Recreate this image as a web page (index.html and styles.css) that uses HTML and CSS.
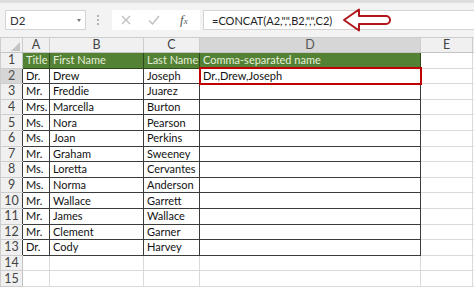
FILE: index.html
```html
<!DOCTYPE html>
<html>
<head>
    <meta charset="utf-8">
    <link rel="stylesheet" href="styles.css">
</head>
<body>
<div class="topEdge"></div>
<div class="formulaBar">
    <div class="nameBox"><span>D2</span><i class="dropArrow"></i></div>
    <div class="grip"><i></i><i></i><i></i></div>
    <div class="fxBox">
        <svg class="cancelIcon" width="10" height="10" viewBox="0 0 10 10"><path d="M1 1L9 9M9 1L1 9" stroke="#bdbdbd" stroke-width="1.2" fill="none"/></svg>
        <svg class="enterIcon" width="12" height="10" viewBox="0 0 12 10"><path d="M1 5.5L4.5 9L11 1" stroke="#bdbdbd" stroke-width="1.3" fill="none"/></svg>
        <span class="fx">f<small>x</small></span>
    </div>
    <div class="formulaInput">
        <span class="formulaText">=CONCAT(A2,",",B2,",",C2)</span>
        <svg class="callout" width="52" height="26" viewBox="0 0 52 26"><path d="M4 13L19 2.5L19 9L46 9A4 4 0 0 1 46 17L19 17L19 23.5Z" fill="#fff" stroke="#b0171c" stroke-width="2" stroke-linejoin="round"/></svg>
    </div>
</div>
<table class="sheet">
    <colgroup>
        <col style="width:22px"><col style="width:27px"><col style="width:94px"><col style="width:56px"><col style="width:221px"><col style="width:52px"><col style="width:2px">
    </colgroup>
    <tr class="colHead">
        <th class="corner"><svg width="9" height="9" viewBox="0 0 9 9"><path d="M9 0L9 9L0 9Z" fill="#c4c4c4"/></svg></th>
        <th>A</th><th>B</th><th>C</th><th class="active">D</th><th>E</th><th></th>
    </tr>
    <tr class="tableHead">
        <th>1</th><td>Title</td><td>First Name</td><td>Last Name</td><td>Comma-separated name</td><td></td><td></td>
    </tr>
    <tr class="data">
        <th class="active">2</th><td>Dr.</td><td>Drew</td><td>Joseph</td><td class="selected">Dr.,Drew,Joseph</td><td></td><td></td>
    </tr>
    <tr class="data"><th>3</th><td>Mr.</td><td>Freddie</td><td>Juarez</td><td></td><td></td><td></td></tr>
    <tr class="data"><th>4</th><td>Mrs.</td><td>Marcella</td><td>Burton</td><td></td><td></td><td></td></tr>
    <tr class="data"><th>5</th><td>Ms.</td><td>Nora</td><td>Pearson</td><td></td><td></td><td></td></tr>
    <tr class="data"><th>6</th><td>Ms.</td><td>Joan</td><td>Perkins</td><td></td><td></td><td></td></tr>
    <tr class="data"><th>7</th><td>Mr.</td><td>Graham</td><td>Sweeney</td><td></td><td></td><td></td></tr>
    <tr class="data"><th>8</th><td>Ms.</td><td>Loretta</td><td>Cervantes</td><td></td><td></td><td></td></tr>
    <tr class="data"><th>9</th><td>Ms.</td><td>Norma</td><td>Anderson</td><td></td><td></td><td></td></tr>
    <tr class="data"><th>10</th><td>Mr.</td><td>Wallace</td><td>Garrett</td><td></td><td></td><td></td></tr>
    <tr class="data"><th>11</th><td>Mr.</td><td>James</td><td>Wallace</td><td></td><td></td><td></td></tr>
    <tr class="data"><th>12</th><td>Mr.</td><td>Clement</td><td>Garner</td><td></td><td></td><td></td></tr>
    <tr class="data"><th>13</th><td>Dr.</td><td>Cody</td><td>Harvey</td><td></td><td></td><td></td></tr>
    <tr><th>14</th><td></td><td></td><td></td><td></td><td></td><td></td></tr>
    <tr><th>15</th><td></td><td></td><td></td><td></td><td></td><td></td></tr>
</table>
</body>
</html>
```

FILE: styles.css
```css
body{
    margin: 0; padding: 0;
    background-color: #f3f3f3;
    font-family: Lato, "Open Sans", sans-serif;
    color: #111;
    overflow: hidden;
}
.topEdge{
    height: 3px;
    background-color: #dedede;
}
.formulaBar{
    display: flex;
    height: 20px;
    margin: 7px 0 7px 0;
    padding-left: 5px;
}
.nameBox{
    width: 81px;
    box-sizing: border-box;
    display: flex; align-items: center; justify-content: space-between;
    padding: 0 4px 0 4px;
    background-color: #fff;
    border: 1px solid #d4d4d4;
    font-size: 11.5px; color: #333;
}
.dropArrow{
    width: 0; height: 0;
    border-left: 2.5px solid transparent;
    border-right: 2.5px solid transparent;
    border-top: 3px solid #777;
}
.grip{
    display: flex; flex-direction: column; justify-content: center; gap: 2px;
    width: 2px;
    margin-left: 11px;
}
.grip i{
    display: block; width: 2px; height: 2px;
    background-color: #b5b5b5;
}
.fxBox{
    width: 88px;
    margin-left: 13px;
    display: flex; align-items: center;
    padding-left: 9px;
    box-sizing: border-box;
    background-color: #fff;
}
.enterIcon{ margin-left: 17px; }
.fx{
    margin-left: 20px;
    font-family: "Liberation Serif", serif;
    font-style: italic;
    font-size: 13px;
    color: #555;
}
.fx small{ font-size: 9px; }
.formulaInput{
    position: relative;
    flex: 1;
    margin-left: 3px;
    display: flex; align-items: center;
    padding-left: 8px;
    background-color: #fff;
    border: 1px solid #d4d4d4;
    border-right: 0;
    font-size: 11px; color: #222;
}
.callout{
    position: absolute;
    left: 136px; top: -4px;
}
.sheet{
    width: 474px;
    table-layout: fixed;
    border-collapse: collapse;
    background-color: #fff;
    font-size: 11px;
    line-height: 12px;
}
.sheet tr{ height: 15.6px; }
.sheet td, .sheet th{
    padding: 0 0 0 3px;
    border: 1px solid #dadada;
    white-space: nowrap;
    overflow: hidden;
    text-align: left;
    font-weight: normal;
}
.sheet th{
    padding: 0;
    text-align: center;
    background-color: #f0f0f0;
    border-color: #cdcdcd;
    color: #444;
    font-size: 12.5px;
}
.sheet tr > th:first-child{ border-right: none; }
.sheet td:nth-child(2){ border-left-color: #c4c4c4; }
.sheet tr.colHead{ height: 15px; }
.colHead th{
    border-bottom-color: #c4c4c4;
}
.sheet .corner{
    text-align: right;
    vertical-align: bottom;
    padding: 0 2px 1px 0;
    line-height: 0;
}
.sheet th.active{
    background-color: #d6d6d6;
    color: #555;
}
.tableHead td{
    background-color: #548235;
    color: #e6efd9;
    border-color: #2e4a1d;
}
.tableHead td:nth-child(n+6){
    background-color: #fff;
    border-color: #dadada;
}
.data td:nth-child(-n+5){
    border-color: #3b3b3b;
}
.sheet td.selected{
    outline: 2px solid #c00000;
    outline-offset: -1px;
}
```
